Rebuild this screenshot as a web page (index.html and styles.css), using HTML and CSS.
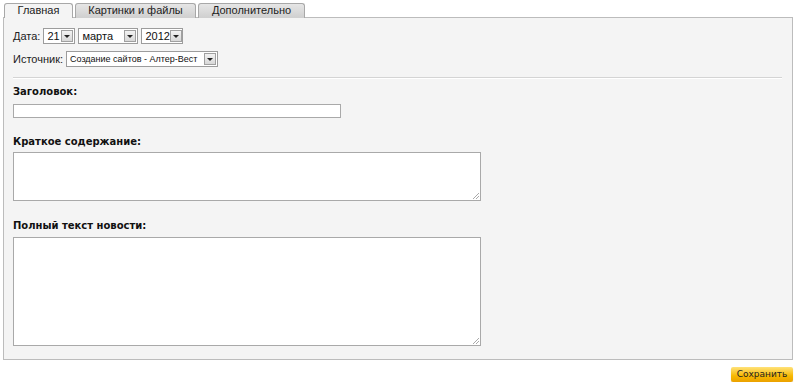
FILE: index.html
```html
<!DOCTYPE html>
<html lang="ru">

<head>
    <meta charset="UTF-8">
    <title>Новость</title>
    <link rel="stylesheet" href="styles.css">
</head>

<body>

    <div class="page">

        <div class="tabs">
            <div class="tab active">Главная</div>
            <div class="tab wide">Картинки и файлы</div>
            <div class="tab mid">Дополнительно</div>
        </div>

        <div class="panel">

            <div class="row">
                <span class="label">Дата:</span>
                <span class="select s-day"><span class="val">21</span><span class="arrow"></span></span>
                <span class="select s-month"><span class="val">марта</span><span class="arrow"></span></span>
                <span class="select s-year"><span class="val">2012</span><span class="arrow"></span></span>
            </div>

            <div class="row second">
                <span class="label">Источник:</span>
                <span class="select s-src"><span class="val small">Создание сайтов - Алтер-Вест</span><span class="arrow"></span></span>
            </div>

            <div class="sep"></div>

            <div class="field-title first">Заголовок:</div>
            <div class="input"></div>

            <div class="field-title">Краткое содержание:</div>
            <div class="area short"><span class="grip"></span></div>

            <div class="field-title third">Полный текст новости:</div>
            <div class="area long"><span class="grip"></span></div>

        </div>

        <div class="actions">
            <span class="btn">Сохранить</span>
        </div>

    </div>

</body>

</html>
```

FILE: styles.css
```css
body {
    margin: 0;
    background: #fff;
    font-family: Tahoma, "DejaVu Sans", sans-serif;
    font-size: 11px;
    color: #222;
}

.page {
    padding: 3px 7px 0 3px;
}

/* вкладки */
.tabs {
    display: flex;
    gap: 2px;
    padding-left: 1px;
    height: 14px;
}

.tab {
    box-sizing: border-box;
    height: 15px;
    width: 69px;
    border: 1px solid #a8a8a8;
    border-bottom: none;
    border-radius: 3px 3px 0 0;
    background: linear-gradient(#e6e6e6, #cfcfcf);
    font-family: "Liberation Sans", Arial, sans-serif;
    font-size: 11px;
    line-height: 13px;
    text-align: center;
    color: #222;
    position: relative;
    z-index: 1;
}

.tab.wide {
    width: 121px;
}

.tab.mid {
    width: 107px;
}

.tab.active {
    background: #f4f4f4;
}

.panel {
    box-sizing: border-box;
    height: 343px;
    border: 1px solid #bcbcbc;
    background: #f4f4f4;
    padding: 10px 9px 0 9px;
}

/* строки выбора */
.row {
    display: flex;
    align-items: center;
    gap: 3px;
    height: 16px;
}

.row.second {
    margin-top: 7px;
}

.label {
    font-family: "Liberation Sans", Arial, sans-serif;
    font-size: 11px;
    color: #222;
}

.select {
    box-sizing: border-box;
    display: inline-flex;
    align-items: center;
    justify-content: space-between;
    height: 16px;
    border: 1px solid #9c9c9c;
    background: #fff;
    padding: 0 1px 0 3px;
}

.select .val {
    font-family: "Liberation Sans", Arial, sans-serif;
    font-size: 11px;
    line-height: 13px;
    color: #111;
    white-space: nowrap;
}

.select .val.small {
    font-size: 9px;
}

.select .arrow {
    box-sizing: border-box;
    flex: none;
    width: 12px;
    height: 12px;
    border: 1px solid #a0a0a0;
    background: linear-gradient(#f2f2f2, #d8d8d8);
    position: relative;
}

.select .arrow::after {
    content: "";
    position: absolute;
    left: 2px;
    top: 4px;
    border-left: 3px solid transparent;
    border-right: 3px solid transparent;
    border-top: 3px solid #222;
}

.s-day {
    width: 32px;
}

.s-month {
    width: 60px;
}

.s-year {
    width: 42px;
}

.s-src {
    width: 152px;
}

.sep {
    height: 1px;
    background: #d4d4d4;
    border-bottom: 1px solid #fff;
    margin-top: 10px;
    margin-right: 1px;
}

/* поля */
.field-title {
    font-family: "DejaVu Sans", Verdana, sans-serif;
    font-weight: bold;
    font-size: 10px;
    line-height: 13px;
    color: #111;
    margin-top: 17px;
}

.field-title.first {
    margin-top: 6px;
}

.field-title.third {
    margin-top: 18px;
}

.input {
    box-sizing: border-box;
    width: 328px;
    height: 14px;
    border: 1px solid #a9a9a9;
    background: #fff;
    margin-top: 6px;
}

.area {
    box-sizing: border-box;
    width: 468px;
    border: 1px solid #a9a9a9;
    background: #fff;
    margin-top: 4px;
    position: relative;
}

.area.short {
    height: 49px;
}

.area.long {
    height: 109px;
    margin-top: 5px;
}

.grip {
    position: absolute;
    right: 1px;
    bottom: 1px;
    width: 6px;
    height: 6px;
    background: linear-gradient(135deg, transparent 45%, #aaa 45%, #aaa 55%, transparent 55%, transparent 70%, #aaa 70%, #aaa 80%, transparent 80%);
}

/* кнопка */
.actions {
    display: flex;
    justify-content: flex-end;
    margin-top: 7px;
}

.btn {
    box-sizing: border-box;
    width: 62px;
    height: 15px;
    border-radius: 2px;
    background: linear-gradient(#ffe27a, #f7b800 60%, #eba100);
    box-shadow: 0 1px 1px rgba(0, 0, 0, 0.2);
    font-family: "DejaVu Sans", Verdana, sans-serif;
    font-size: 9px;
    line-height: 15px;
    text-align: center;
    color: #222;
}
```
